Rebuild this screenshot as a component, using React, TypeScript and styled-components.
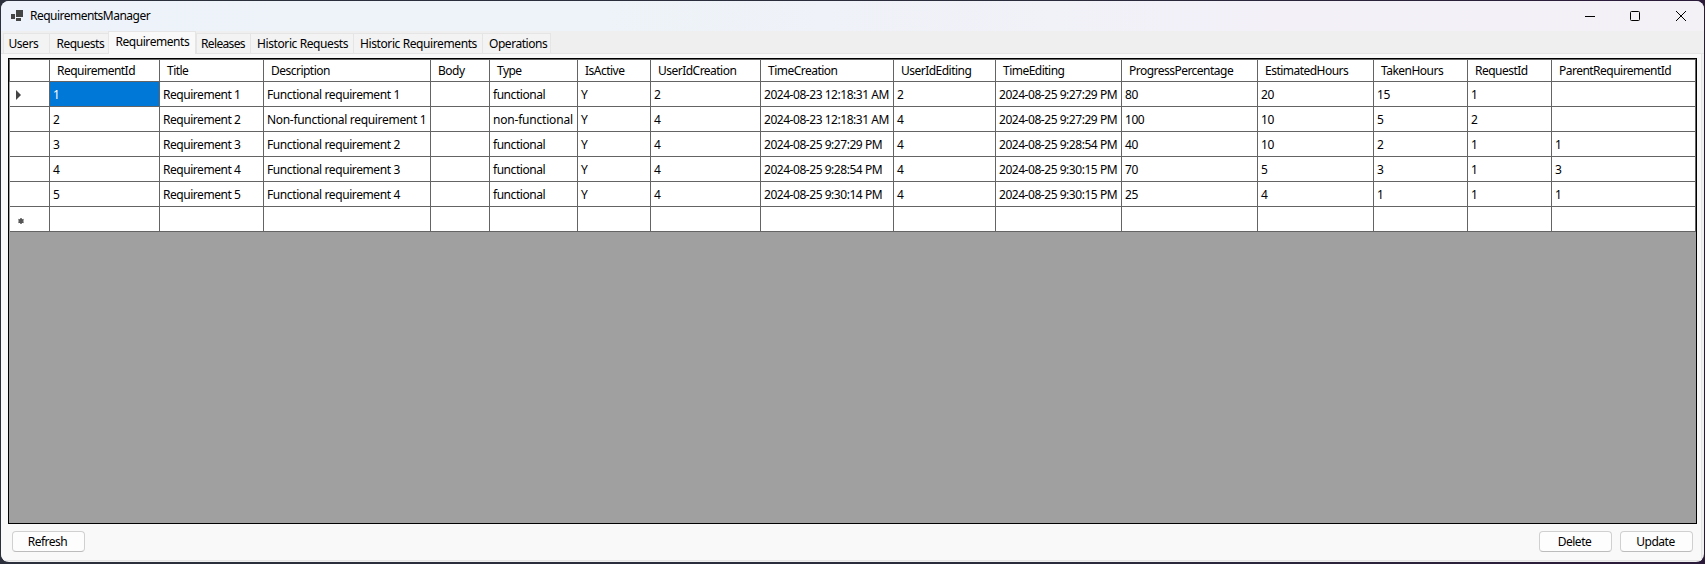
import React from 'react';
import styled, { createGlobalStyle } from 'styled-components';

const GlobalStyle = createGlobalStyle`
  * { box-sizing: border-box; }
  body { margin: 0; background: #25262f; overflow: hidden; }
`;

const Desktop = styled.div`
  height: 564px;
  padding: 1px 1px 2px;
  background: linear-gradient(90deg, #2b303c, #2a2c3c 60%, #2b1a3a);
  font-family: 'Noto Sans', 'Open Sans', sans-serif;
  font-size: 12px;
  color: #000;
`;

const Window = styled.div`
  height: 561px;
  display: flex;
  flex-direction: column;
  border-radius: 8px;
  overflow: hidden;
  background: #f0f0f0;
`;

const Label = styled.span<{ $ls?: number }>`
  letter-spacing: ${(p) => p.$ls ?? -0.5}px;
  white-space: pre;
`;

const TitleBar = styled.header`
  height: 30px;
  flex: none;
  display: flex;
  align-items: center;
  padding-left: 10px;
  gap: 7px;
  background: linear-gradient(90deg, #eef3fb, #edf3f8 35%, #f3f0f8 75%, #f3f1f6);
`;

const AppTitle = styled(Label)`
  flex: 1;
  line-height: 30px;
`;

const Controls = styled.div`
  display: flex;
  height: 28px;
`;

const ControlButton = styled.button<{ $w?: number }>`
  width: ${(p) => p.$w ?? 46}px;
  padding: 0;
  border: 0;
  background: transparent;
  display: flex;
  align-items: center;
  justify-content: center;
`;

const TabStrip = styled.nav`
  height: 23px;
  flex: none;
  display: flex;
  align-items: flex-end;
  padding-left: 2px;
  background: #efefef;
  box-shadow: inset 0 -1px #e5e5e5;
`;

const Tab = styled.div<{ $w: number; $pad: number; $active?: boolean }>`
  width: ${(p) => p.$w}px;
  height: ${(p) => (p.$active ? 23 : 21)}px;
  padding-left: ${(p) => p.$pad}px;
  line-height: 20px;
  border: 1px solid #e5e5e5;
  border-width: ${(p) => (p.$active ? '1px 1px 0' : '1px 0 1px 1px')};
  background: ${(p) => (p.$active ? '#f9f9f9' : '#f3f3f3')};
  &:last-child { border-right-width: 1px; }
`;

const Page = styled.main`
  flex: 1;
  display: flex;
  flex-direction: column;
  margin: 0 2px 1px 0;
  padding: 4px 4px 0 7px;
  border-right: 1px solid #e5e5e5;
  border-bottom: 1px solid #e5e5e5;
  background: #f9f9f9;
`;

const Grid = styled.section`
  width: 1689px;
  height: 466px;
  border: 1px solid #000;
  background: #a0a0a0;
`;

const Row = styled.div<{ $header?: boolean }>`
  display: grid;
  grid-template-columns: 40px 110px 104px 167px 59px 88px 73px 110px 133px 102px 126px 136px 116px 94px 84px 144px;
  height: ${(p) => (p.$header ? 23 : 25)}px;
  border-left: 1px solid ${(p) => (p.$header ? '#646464' : '#a0a0a0')};
  border-top: ${(p) => (p.$header ? '1px solid #646464' : '0')};
`;

const Cell = styled.div<{ $header?: boolean; $selected?: boolean }>`
  border-right: 1px solid #646464;
  border-bottom: 1px solid #646464;
  background: ${(p) => (p.$selected ? '#0078d7' : '#fff')};
  color: ${(p) => (p.$selected ? '#fff' : '#000')};
  padding-left: ${(p) => (p.$header ? 7 : 3)}px;
  line-height: ${(p) => (p.$header ? 21 : 25)}px;
  overflow: hidden;
  white-space: nowrap;
`;

const Marker = styled(Cell)`
  display: flex;
  align-items: center;
  padding: 2px 0 0 6px;
`;

const Footer = styled.footer`
  display: flex;
  gap: 8px;
  padding: 7px 4px 0;
`;

const Spacer = styled.div`
  flex: 1;
`;

const Button = styled.button`
  width: 73px;
  height: 21px;
  padding: 0 2px 0 0;
  border: 1px solid #d0d0d0;
  border-bottom-color: #bcbcbc;
  border-radius: 4px;
  background: #fdfdfd;
  color: #000;
  font: inherit;
  line-height: 19px;
`;

const tabs = [
  { label: 'Users', w: 46, pad: 4.5, ls: -0.45 },
  { label: 'Requests', w: 59, pad: 6.5, ls: -0.5 },
  { label: 'Requirements', w: 88, pad: 6.5, ls: -0.45 },
  { label: 'Releases', w: 54, pad: 4, ls: -0.65 },
  { label: 'Historic Requests', w: 103, pad: 6, ls: -0.4 },
  { label: 'Historic Requirements', w: 129, pad: 6, ls: -0.4 },
  { label: 'Operations', w: 69, pad: 6, ls: -0.45 },
];

const columns = ['RequirementId', 'Title', 'Description', 'Body', 'Type', 'IsActive', 'UserIdCreation', 'TimeCreation', 'UserIdEditing', 'TimeEditing', 'ProgressPercentage', 'EstimatedHours', 'TakenHours', 'RequestId', 'ParentRequirementId'];

const rows = [
  ['1', 'Requirement 1', 'Functional requirement 1', '', 'functional', 'Y', '2', '2024-08-23 12:18:31 AM', '2', '2024-08-25 9:27:29 PM', '80', '20', '15', '1', ''],
  ['2', 'Requirement 2', 'Non-functional requirement 1', '', 'non-functional', 'Y', '4', '2024-08-23 12:18:31 AM', '4', '2024-08-25 9:27:29 PM', '100', '10', '5', '2', ''],
  ['3', 'Requirement 3', 'Functional requirement 2', '', 'functional', 'Y', '4', '2024-08-25 9:27:29 PM', '4', '2024-08-25 9:28:54 PM', '40', '10', '2', '1', '1'],
  ['4', 'Requirement 4', 'Functional requirement 3', '', 'functional', 'Y', '4', '2024-08-25 9:28:54 PM', '4', '2024-08-25 9:30:15 PM', '70', '5', '3', '1', '3'],
  ['5', 'Requirement 5', 'Functional requirement 4', '', 'functional', 'Y', '4', '2024-08-25 9:30:14 PM', '4', '2024-08-25 9:30:15 PM', '25', '4', '1', '1', '1'],
  Array(15).fill(''),
];

const cellSpacing = (text: string) => {
  if (text === 'non-functional') return -0.2;
  if (text.startsWith('Non-')) return -0.31;
  if (text.startsWith('Functional')) return -0.4;
  return -0.46;
};

export default function App() {
  return (
    <Desktop>
      <GlobalStyle />
      <Window>
        <TitleBar>
          <svg width="12" height="12" viewBox="0 0 12 12" fill="#444">
            <path d="M5 0h7v7H5zM0 4h4v5H0zM5 8h5v3H5z" />
          </svg>
          <AppTitle $ls={-0.52}>RequirementsManager</AppTitle>
          <Controls>
            <ControlButton $w={44}><svg width="10" height="10"><path d="M0 5.5h10" stroke="#000" /></svg></ControlButton>
            <ControlButton><svg width="10" height="10"><rect x=".5" y=".5" width="9" height="9" rx="1" fill="none" stroke="#000" /></svg></ControlButton>
            <ControlButton><svg width="10" height="10"><path d="M0 0l10 10M10 0L0 10" stroke="#000" /></svg></ControlButton>
          </Controls>
        </TitleBar>
        <TabStrip>
          {tabs.map((t) => (
            <Tab key={t.label} $w={t.w} $pad={t.pad} $active={t.label === 'Requirements'}>
              <Label $ls={t.ls}>{t.label}</Label>
            </Tab>
          ))}
        </TabStrip>
        <Page>
          <Grid>
            <Row $header>
              <Cell $header />
              {columns.map((c) => <Cell $header key={c}><Label $ls={-0.52}>{c}</Label></Cell>)}
            </Row>
            {rows.map((r, i) => (
              <Row key={i}>
                <Marker>
                  {i === 0 && <svg width="5" height="10"><path d="M0 0l5 5L0 10z" fill="#444" /></svg>}
                  {i === 5 && (
                    <svg width="10" height="8">
                      <path d="M5 2v6M2.4 3.5l5.2 3M7.6 3.5l-5.2 3" stroke="#555" strokeWidth="1.5" />
                      <circle cx="5" cy="5" r="1.8" fill="#555" />
                    </svg>
                  )}
                </Marker>
                {r.map((v, j) => (
                  <Cell key={j} $selected={i === 0 && j === 0}><Label $ls={cellSpacing(v)}>{v}</Label></Cell>
                ))}
              </Row>
            ))}
          </Grid>
          <Footer>
            <Button><Label>Refresh</Label></Button>
            <Spacer />
            <Button><Label>Delete</Label></Button>
            <Button><Label>Update</Label></Button>
          </Footer>
        </Page>
      </Window>
    </Desktop>
  );
}
